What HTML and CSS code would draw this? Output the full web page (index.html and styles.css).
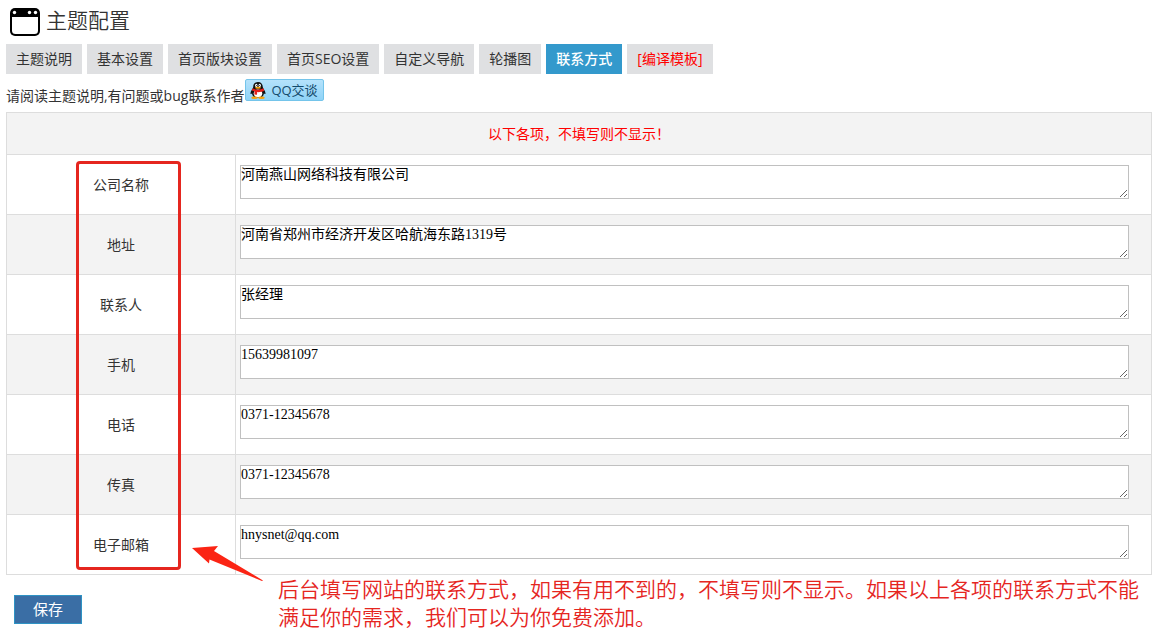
FILE: index.html
```html
<!DOCTYPE html>
<html lang="zh-CN">
<head>
<meta charset="utf-8">
<title>主题配置</title>
<link rel="stylesheet" href="styles.css">
</head>
<body>
<header class="page-head">
  <svg class="head-icon" viewBox="0 0 30 28" aria-hidden="true">
    <rect width="30" height="28" rx="5"/>
    <path fill="#fff" d="M2 9h26v13.500a3.500 3.500 0 0 1-3.500 3.500h-19a3.500 3.500 0 0 1-3.500-3.500z"/>
    <g fill="#fff"><circle cx="4.500" cy="4.500" r="1.700"/><circle cx="19.500" cy="4.500" r="1.700"/><circle cx="25.500" cy="4.500" r="1.700"/></g>
  </svg>
  <h1 class="title">主题配置</h1>
</header>
<nav class="tabs">
  <a class="tab" href="#">主题说明</a>
  <a class="tab" href="#">基本设置</a>
  <a class="tab" href="#">首页版块设置</a>
  <a class="tab" href="#">首页SEO设置</a>
  <a class="tab" href="#">自定义导航</a>
  <a class="tab" href="#">轮播图</a>
  <a class="tab tab-active" href="#">联系方式</a>
  <a class="tab tab-compile" href="#">[编译模板]</a>
</nav>
<p class="intro"><span class="intro-text">请阅读主题说明,有问题或bug联系作者</span><a class="qq" href="#"><svg class="qq-icon" viewBox="0 0 16 17" aria-hidden="true">
  <path fill="#111" d="M8 0C5 0 3.200 2 3.200 5c0 1.500-2.900 4-2.700 6.500.1 1 .8.700 1.500-.3.300 3 2.500 4.800 6 4.800s5.700-1.800 6-4.800c.7 1 1.400 1.300 1.500.3.200-2.500-2.700-5-2.700-6.500 0-3-1.800-5-4.800-5z"/>
  <ellipse cx="8" cy="11.500" rx="4.300" ry="4" fill="#fff"/>
  <ellipse cx="6.300" cy="3.400" rx="1.200" ry="1.600" fill="#fff"/><ellipse cx="9.700" cy="3.400" rx="1.200" ry="1.600" fill="#fff"/>
  <circle cx="6.700" cy="3.600" r=".5"/><circle cx="9.300" cy="3.600" r=".5"/>
  <ellipse cx="8" cy="5.700" rx="2.900" ry="1" fill="#f8a20d"/>
  <path fill="#e3201b" d="M2.600 6.300c3 1.800 7.800 1.800 10.800 0l.8 2.400c-2.200 1.200-4.600 1.600-7 1.400l-.2 2.700-2.600-.3.200-3.200-2.800-.9z"/>
  <ellipse cx="4.500" cy="15.700" rx="3.200" ry="1.200" fill="#f8a20d"/><ellipse cx="11.500" cy="15.700" rx="3.200" ry="1.200" fill="#f8a20d"/>
</svg>QQ交谈</a></p>
<form class="config">
  <div class="sheet">
    <table class="grid">
      <colgroup><col class="col-name"><col></colgroup>
      <thead><tr><th class="notice" colspan="2">以下各项，不填写则不显示！</th></tr></thead>
      <tbody>
        <tr><th class="name"><label for="company">公司名称</label></th><td class="value"><textarea class="field" id="company">河南燕山网络科技有限公司</textarea></td></tr>
        <tr><th class="name"><label for="address">地址</label></th><td class="value"><textarea class="field" id="address">河南省郑州市经济开发区哈航海东路1319号</textarea></td></tr>
        <tr><th class="name"><label for="contact">联系人</label></th><td class="value"><textarea class="field" id="contact">张经理</textarea></td></tr>
        <tr><th class="name"><label for="mobile">手机</label></th><td class="value"><textarea class="field" id="mobile">15639981097</textarea></td></tr>
        <tr><th class="name"><label for="phone">电话</label></th><td class="value"><textarea class="field" id="phone">0371-12345678</textarea></td></tr>
        <tr><th class="name"><label for="fax">传真</label></th><td class="value"><textarea class="field" id="fax">0371-12345678</textarea></td></tr>
        <tr><th class="name"><label for="email">电子邮箱</label></th><td class="value"><textarea class="field" id="email">hnysnet@qq.com</textarea></td></tr>
      </tbody>
    </table>
    <div class="mark"></div>
    <svg class="arrow" viewBox="0 0 72 36" aria-hidden="true"><path fill="#fb2414" d="M0 2 26 0l-4 5 49 29.500-1 .5-52.500-21.500-.5 4z"/></svg>
  </div>
  <div class="foot">
    <button class="save" type="button">保存</button>
    <p class="remark">后台填写网站的联系方式，如果有用不到的，不填写则不显示。如果以上各项的联系方式不能满足你的需求，我们可以为你免费添加。</p>
  </div>
</form>
</body>
</html>
```
FILE: styles.css
```css
* { box-sizing: border-box; }

body {
  margin: 0;
  padding: 6px;
  background: #fff;
  color: #333;
  font: 14px/20px "Open Sans", "Noto Sans CJK SC", sans-serif;
}

.page-head {
  display: flex;
  align-items: center;
  gap: 6px;
  height: 32px;
  padding-left: 4px;
}
.head-icon { width: 30px; height: 28px; }
.title { margin: 0; padding-bottom: 4px; font-size: 21px; line-height: 28px; font-weight: 350; }

.tabs { display: flex; gap: 5px; margin-top: 6px; }
.tab {
  padding: 5px 10px;
  background: #dfe0e2;
  color: #333;
  text-decoration: none;
  white-space: nowrap;
}
.tab-active { background: #3399cc; color: #fff; font-weight: 500; }
.tab-compile { color: #f00; }

.intro { display: flex; align-items: flex-start; margin: 5px 0 10px; }
.intro-text { padding-top: 6px; line-height: 22px; height: 23px; }
.qq {
  display: flex;
  align-items: center;
  gap: 5px;
  height: 22px;
  margin-left: 1px;
  padding: 0 5px 0 4px;
  border: 1px solid #74c4ea;
  border-radius: 2px;
  background: linear-gradient(#b5e2fb, #8fd3f7);
  color: #124a6b;
  font-size: 13px;
  text-decoration: none;
}
.qq-icon { width: 16px; height: 17px; }

.sheet { position: relative; }
.grid { width: 100%; border-collapse: collapse; table-layout: fixed; }
.grid th, .grid td { border: 1px solid #ddd; font-weight: 400; }
.grid tbody tr:nth-child(even), .grid thead tr { background: #f3f3f3; }
.grid .notice { height: 42px; padding: 0; color: #f00; }
.col-name { width: 20%; }
.grid .name { padding: 0; }
.value { height: 60px; padding: 0 4px; }
.field {
  display: block;
  width: 98%;
  height: 34px;
  margin-bottom: 5px;
  padding: 0;
  border: 1px solid #c0c0c0;
  background: #fff;
  color: #000;
  font: 14px/18px "Liberation Serif", "Noto Sans CJK SC", serif;
  resize: vertical;
}

.mark {
  position: absolute;
  top: 49px;
  left: 70px;
  width: 105px;
  height: 409px;
  border: 3px solid #e5261f;
  border-radius: 4px;
}
.arrow { position: absolute; top: 434px; left: 186px; width: 72px; height: 36px; }

.foot { display: flex; align-items: flex-start; padding-left: 8px; }
.save {
  flex: none;
  width: 68px;
  height: 29px;
  margin: 20px 196px 0 0;
  padding: 0 0 2px;
  border: 1px solid #2e93c4;
  background: #3a6ea5;
  color: #fff;
  font: 15px/20px "Open Sans", "Noto Sans CJK SC", sans-serif;
}
.remark { margin: 0; color: #e5261f; font-size: 21px; line-height: 28px; font-weight: 350; }
```
